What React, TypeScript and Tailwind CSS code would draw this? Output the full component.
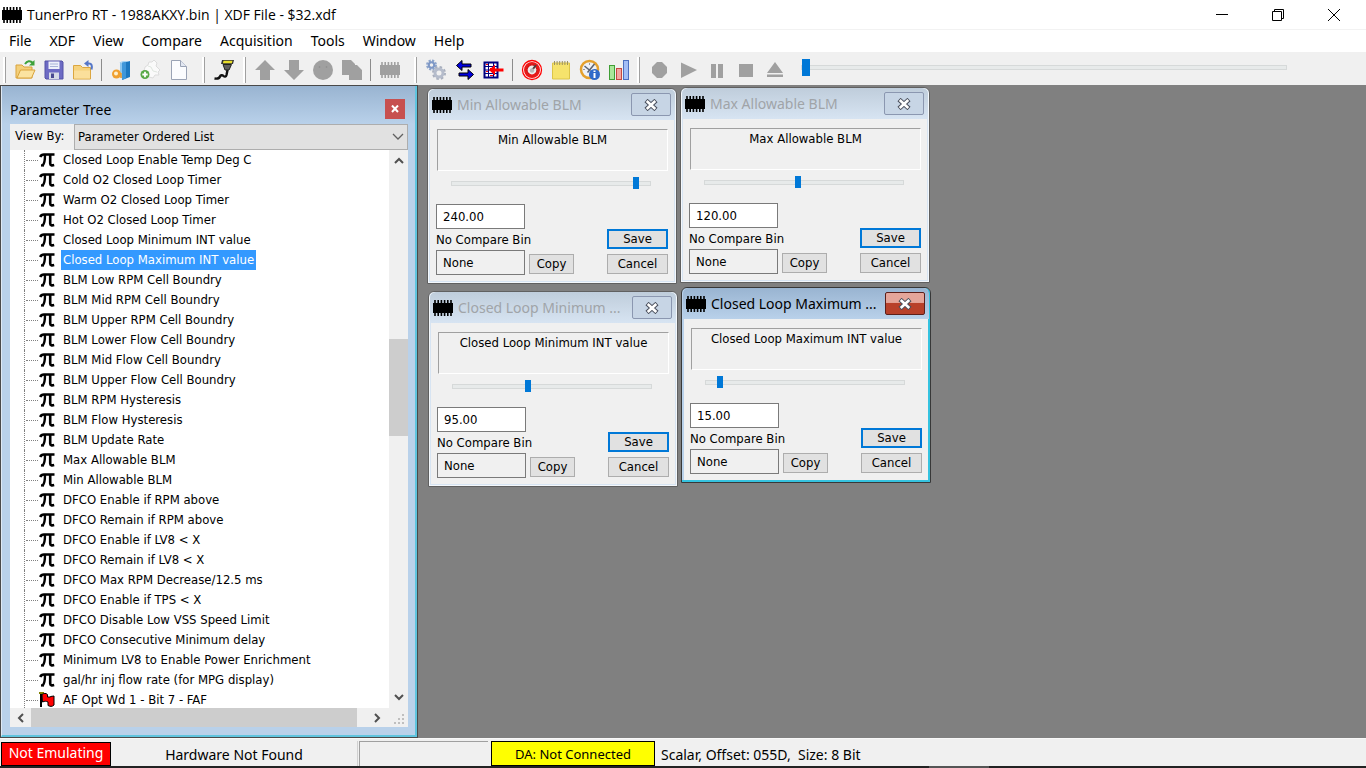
import { useState } from "react";
import type { ReactNode } from "react";

type ScalarWindowProps = {
  id: string;
  title: string;
  name: string;
  initial: number;
  place: string;
  active?: boolean;
};

const treeItems = [
  "Closed Loop Enable Temp Deg C",
  "Cold O2 Closed Loop Timer",
  "Warm O2 Closed Loop Timer",
  "Hot O2 Closed Loop Timer",
  "Closed Loop Minimum INT value",
  "Closed Loop Maximum INT value",
  "BLM Low RPM Cell Boundry",
  "BLM Mid RPM Cell Boundry",
  "BLM Upper RPM Cell Boundry",
  "BLM Lower Flow Cell Boundry",
  "BLM Mid Flow Cell Boundry",
  "BLM Upper Flow Cell Boundry",
  "BLM RPM Hysteresis",
  "BLM Flow Hysteresis",
  "BLM Update Rate",
  "Max Allowable BLM",
  "Min Allowable BLM",
  "DFCO Enable if RPM above",
  "DFCO Remain if RPM above",
  "DFCO Enable if LV8 < X",
  "DFCO Remain if LV8 < X",
  "DFCO Max RPM Decrease/12.5 ms",
  "DFCO Enable if TPS < X",
  "DFCO Disable Low VSS Speed Limit",
  "DFCO Consecutive Minimum delay",
  "Minimum LV8 to Enable Power Enrichment",
  "gal/hr inj flow rate (for MPG display)",
  "AF Opt Wd 1 - Bit 7 - FAF",
];

const menus = ["File", "XDF", "View", "Compare", "Acquisition", "Tools", "Window", "Help"];

function Chip({ color = "#000" }: { color?: string }) {
  return (
    <svg width="20" height="16" viewBox="0 0 20 16" className="shrink-0" aria-hidden="true">
      <rect x="0" y="3" width="20" height="10" fill={color} />
      <path d="M2 0v16M5.2 0v16M8.4 0v16M11.6 0v16M14.8 0v16M18 0v16" stroke={color} strokeWidth="1.6" />
    </svg>
  );
}

function Pi() {
  return (
    <svg width="16" height="16" viewBox="0 0 16 16" aria-hidden="true">
      <path d="M1.2 5C2 3 3 2.5 5 2.5H15.500" fill="none" stroke="#000" strokeWidth="2.6" />
      <path d="M6 3c0 5 0 8-2.2 10.3" fill="none" stroke="#000" strokeWidth="2.4" />
      <path d="M2 13.4h3" stroke="#000" strokeWidth="2.4" />
      <path d="M11.2 3v8.5c0 2 1.6 2.2 4 1.600" fill="none" stroke="#000" strokeWidth="2.6" />
    </svg>
  );
}

function Flag() {
  return (
    <svg width="16" height="16" viewBox="0 0 16 16" aria-hidden="true">
      <path d="M0 0h5v2H0z" fill="#808000" />
      <path d="M2 2v13" stroke="#000" strokeWidth="2" />
      <path d="M3 2.500c2-1.500 4-1.500 5.500 0V5h3V4.500L15 4v9c-2 2-4 1.500-6 .5V10c-2-1-3-1-5.500 0z" fill="#f00" stroke="#000" strokeWidth="1" />
    </svg>
  );
}

function Chevron({ d }: { d: string }) {
  return (
    <svg width="12" height="12" viewBox="0 0 12 12" aria-hidden="true">
      <path d={d} fill="none" stroke="#505050" strokeWidth="2" />
    </svg>
  );
}

function ToolButton({ label, children }: { label: string; children: ReactNode }) {
  return (
    <button type="button" aria-label={label} className="flex h-7 w-[29px] shrink-0 items-center justify-center">
      {children}
    </button>
  );
}

function Icon({ children }: { children: ReactNode }) {
  return (
    <svg width="22" height="22" viewBox="0 0 22 22" aria-hidden="true">
      {children}
    </svg>
  );
}

function Grip() {
  return <div className="mx-1 h-[26px] w-[3px] shrink-0 border-r border-[#a0a0a0] bg-white" />;
}

function Separator() {
  return <div className="mx-1 h-[22px] w-px shrink-0 bg-[#8c8c8c]" />;
}

function FolderShape() {
  return (
    <>
      <path d="M2 6h6l2 2h8v11H2z" fill="#f3cf7a" stroke="#d9a33c" />
      <path d="M3 19L6.500 11H21l-3.500 8z" fill="#fbe3a0" stroke="#d9a33c" />
    </>
  );
}

function Toolbar() {
  return (
    <div className="flex h-[33px] shrink-0 items-center bg-[#f0f0f0] pt-[2px] pl-[3px]">
      <div className="mr-1 h-[26px] w-[3px] shrink-0 border-r border-[#a0a0a0] bg-white" />
      <ToolButton label="Open">
        <Icon>
          <FolderShape />
          <path d="M11 5c2-3 5-4 8-1" fill="none" stroke="#3da13b" strokeWidth="2" />
          <path d="M20.500 1v5.500H15z" fill="#3da13b" />
        </Icon>
      </ToolButton>
      <ToolButton label="Save bin">
        <Icon>
          <path d="M2 2h17l1 1v17H3l-1-1z" fill="#6d6bc4" stroke="#5452a6" />
          <path d="M5.500 2.500h11V10h-11z" fill="#eef1fb" />
          <path d="M7 5h8M7 7.500h8" stroke="#a9b4d8" />
          <path d="M6 13.500h10V20H6z" fill="#d7dbe6" />
          <path d="M8 14.500h3V19H8z" fill="#4a4a90" />
        </Icon>
      </ToolButton>
      <ToolButton label="Close bin">
        <Icon>
          <path d="M1.500 6.500h7l2 2h8V20h-17z" fill="#f6d27c" stroke="#dba640" />
          <path d="M2 11.500h16V19.500H2z" fill="#fbdf9b" />
          <path d="M14 4.500h3c2.500 0 3.500 2 2.500 6" fill="none" stroke="#5577c8" strokeWidth="2" />
          <path d="M12 4.500L16.500 1v7z" fill="#5577c8" />
        </Icon>
      </ToolButton>
      <Separator />
      <ToolButton label="Open XDF">
        <Icon>
          <path d="M10 3l3 1v16l-3-2z" fill="#8cc6ef" />
          <path d="M12 3.500L20 2v16l-8 3z" fill="#1c78c0" />
          <path d="M12 3.500L16 2.800V19.500L12 21z" fill="#3f97da" />
          <path d="M9 3.500l4-1.500 7 0-8 1.500z" fill="#a7d4f4" />
          <circle cx="6.500" cy="15" r="4.500" fill="#f0a030" />
          <circle cx="6" cy="14.500" r="2" fill="#fff1cf" />
          <path d="M11 14v5" fill="none" stroke="#ef9a26" strokeWidth="1.500" />
        </Icon>
      </ToolButton>
      <ToolButton label="New XDF">
        <Icon>
          <path d="M6 8l3-2 1-3 3 0 2-2 3 3-1 3 4 4-2 2 1 3-4 0-2 3-4-1-5-6z" fill="#fafafa" stroke="#dcdcdc" />
          <path d="M9 7l3 1 2 4 4 1" fill="none" stroke="#dfe6df" />
          <circle cx="6" cy="15.500" r="4.500" fill="#58a846" />
          <path d="M6 12.800v5.400M3.300 15.500h5.400" stroke="#fff" strokeWidth="1.800" />
        </Icon>
      </ToolButton>
      <ToolButton label="New bin">
        <Icon>
          <path d="M3.500 1.500h9l6 6v13h-15z" fill="#fbfcfe" stroke="#9aa3b5" />
          <path d="M12.500 1.500v6h6" fill="#e3e8f2" stroke="#9aa3b5" />
        </Icon>
      </ToolButton>
      <div className="w-[5px] shrink-0" />
      <Grip />
      <ToolButton label="Connect">
        <Icon>
          <path d="M9 1h12l-1 4H8z" fill="#333" />
          <path d="M10.500 1.800h9l-.6 2.400h-9z" fill="#e9df2b" />
          <path d="M10 5.500h8.500L16 11h-4z" fill="#606060" stroke="#222" />
          <path d="M14.500 11l-1 5c-.5 2-2 2-3 1s-3-1-3.500.5S5 20 1.500 19.500" fill="none" stroke="#111" strokeWidth="2.400" />
        </Icon>
      </ToolButton>
      <div className="w-px shrink-0" />
      <Grip />
      <ToolButton label="Upload">
        <Icon>
          <path d="M11 1l10 10h-5v10H6V11H1z" fill="#a0a0a0" />
        </Icon>
      </ToolButton>
      <ToolButton label="Download">
        <Icon>
          <path d="M11 21l10-10h-5V1H6v10H1z" fill="#a0a0a0" />
        </Icon>
      </ToolButton>
      <ToolButton label="Verify">
        <Icon>
          <circle cx="11" cy="11" r="10" fill="#a0a0a0" />
          <path d="M7.500 7v2M14.500 7v2" stroke="#929292" strokeWidth="1.500" />
        </Icon>
      </ToolButton>
      <ToolButton label="Copy">
        <Icon>
          <path d="M1 1h9l4 4v1h2l5 5v10H8v-5H1z" fill="#a0a0a0" />
        </Icon>
      </ToolButton>
      <Separator />
      <ToolButton label="Chip">
        <Chip color="#a0a0a0" />
      </ToolButton>
      <div className="w-[6px] shrink-0" />
      <Grip />
      <ToolButton label="Settings">
        <Icon>
          <circle cx="6.500" cy="6" r="4" fill="none" stroke="#8fa6cc" strokeWidth="3" strokeDasharray="2 1.140" />
          <circle cx="6.500" cy="6" r="2.700" fill="none" stroke="#7e98c6" strokeWidth="2" />
          <circle cx="14" cy="14" r="5.500" fill="none" stroke="#a8afbd" strokeWidth="3" strokeDasharray="2.300 2" />
          <circle cx="14" cy="14" r="4" fill="none" stroke="#b5bccb" strokeWidth="3" />
        </Icon>
      </ToolButton>
      <ToolButton label="Compare bins">
        <Icon>
          <path d="M2.500 6.500l5.500-5v3.500h9v3H8v3.500z" fill="#0000e0" stroke="#000" />
          <path d="M19.500 15.500l-5.500-5v3.500H5v3h9v3.500z" fill="#0000e0" stroke="#000" />
        </Icon>
      </ToolButton>
      <ToolButton label="Compare tables">
        <Icon>
          <rect x="1.500" y="3.500" width="13" height="15" fill="#fff" stroke="#000080" strokeWidth="2" />
          <path d="M1 7.500h14M1 11h14M1 14.500h14M5.500 3v16M10.500 3v16" stroke="#000080" />
          <path d="M3 5.500h2M7 9.500h3M3 12.500h2M7 16.500h3" stroke="#f00" />
          <path d="M6 11l6-5.500V9.500h8.500v3H12v4z" fill="#f00" />
        </Icon>
      </ToolButton>
      <Separator />
      <ToolButton label="Dashboard">
        <Icon>
          <circle cx="11" cy="11" r="9.500" fill="#fff" stroke="#f00" strokeWidth="1.300" />
          <circle cx="11" cy="11" r="6.200" fill="#ececec" stroke="#e81818" strokeWidth="3.600" />
          <path d="M7.500 14.500a5 5 0 1 1 7-.2" fill="none" stroke="#902020" strokeWidth="1" strokeDasharray="1 1.500" />
          <path d="M10.500 12L15 6" stroke="#4b4040" strokeWidth="2" />
          <circle cx="11" cy="11.500" r="2.200" fill="#b8b8b8" />
        </Icon>
      </ToolButton>
      <ToolButton label="Notes">
        <Icon>
          <path d="M2.500 4h17v16h-17z" fill="#f6e36c" stroke="#dcc548" />
          <path d="M4.500 2v4M7.100 2v4M9.700 2v4M12.300 2v4M14.900 2v4M17.500 2v4" stroke="#9b9262" />
        </Icon>
      </ToolButton>
      <ToolButton label="History">
        <Icon>
          <circle cx="10.500" cy="10.500" r="8.500" fill="#eef1f6" stroke="#e5a02c" strokeWidth="2.500" />
          <path d="M10.500 4v2M4 10.500h2M15.500 10.500h2M10.500 15v2" stroke="#999" />
          <path d="M5.500 7l6 5M15.500 5l-7 8.500" stroke="#5b6270" strokeWidth="1.500" />
          <circle cx="15.500" cy="15.500" r="5.500" fill="#2f69c9" />
          <path d="M15.500 14v5M15.500 11.500v1.600" stroke="#fff" strokeWidth="2" />
        </Icon>
      </ToolButton>
      <ToolButton label="Graph">
        <Icon>
          <rect x="1.500" y="6.500" width="5" height="14" fill="#a9e79a" stroke="#3f9e35" />
          <rect x="8.500" y="9.500" width="5" height="11" fill="#f2a6a0" stroke="#c54840" />
          <rect x="15.500" y="1.500" width="5" height="19" fill="#a3bdf5" stroke="#4d6fc0" />
        </Icon>
      </ToolButton>
      <Grip />
      <ToolButton label="Record">
        <Icon>
          <path d="M9 3h5l5 5v6l-5 5H9l-5-5V8z" fill="#a0a0a0" />
        </Icon>
      </ToolButton>
      <ToolButton label="Play">
        <Icon>
          <path d="M4 3.500L20 11 4 19z" fill="#a0a0a0" />
        </Icon>
      </ToolButton>
      <ToolButton label="Pause">
        <Icon>
          <path d="M5 5h5v14H5zM12 5h5v14h-5z" fill="#a0a0a0" />
        </Icon>
      </ToolButton>
      <ToolButton label="Stop">
        <Icon>
          <path d="M4 5h14v13H4z" fill="#a0a0a0" />
        </Icon>
      </ToolButton>
      <ToolButton label="Eject">
        <Icon>
          <path d="M11 3l8 11H3zM3 15.500h16V18H3z" fill="#a0a0a0" />
        </Icon>
      </ToolButton>
      <input
        type="range"
        aria-label="Playback position"
        defaultValue={0}
        className="mb-1 ml-3 h-[17px] w-[486px] shrink appearance-none bg-transparent [&::-webkit-slider-runnable-track]:h-[5px] [&::-webkit-slider-runnable-track]:border [&::-webkit-slider-runnable-track]:border-[#d6d9d9] [&::-webkit-slider-runnable-track]:bg-[#e7eaea] [&::-webkit-slider-thumb]:-mt-[7px] [&::-webkit-slider-thumb]:h-[17px] [&::-webkit-slider-thumb]:w-2 [&::-webkit-slider-thumb]:appearance-none [&::-webkit-slider-thumb]:bg-[#0078d7]"
      />
    </div>
  );
}

function ParameterTree() {
  const [selected, setSelected] = useState(5);

  return (
    <aside className="flex w-[418px] shrink-0 flex-col border border-[#4a4a4a]">
      <div className="flex min-h-0 flex-1 flex-col border-r-2 border-b-2 border-l border-[#5fc4de] border-l-[#dfe9f4] bg-[#b9d1ea] pr-[7px] pb-2 pl-2">
        <div className="-mr-[7px] -ml-2 flex h-[38px] shrink-0 items-center justify-between bg-linear-to-b from-[#99b4d1] to-[#b9d1ea] pr-[10px] pl-2">
          <h2 className="pt-[10px] text-[14px] leading-5 text-black">Parameter Tree</h2>
          <button type="button" aria-label="Close" className="mt-2 flex h-5 w-5 items-center justify-center bg-[#c75050]">
            <svg width="8" height="8" viewBox="0 0 8 8" aria-hidden="true">
              <path d="M1 .5l6 6.500M7 .5L1 7" stroke="#fff" strokeWidth="2" />
            </svg>
          </button>
        </div>
        <div className="flex h-[26px] shrink-0 bg-[#f0f0f0] font-['DejaVu_Sans_Condensed','Noto_Sans',sans-serif] text-[13px]">
          <label htmlFor="viewBy" className="w-16 shrink-0 pl-[5px] leading-6">
            View By:
          </label>
          <div className="relative flex-1">
            <select id="viewBy" className="h-[26px] w-full appearance-none border border-[#adadad] bg-[#e1e1e1] px-[3px]">
              <option>Parameter Ordered List</option>
            </select>
            <svg width="12" height="8" viewBox="0 0 12 8" className="pointer-events-none absolute top-[9px] right-1" aria-hidden="true">
              <path d="M1 1l5 5 5-5" fill="none" stroke="#606060" strokeWidth="1.300" />
            </svg>
          </div>
        </div>
        <div className="flex min-h-0 flex-1">
          <ul className="min-w-0 flex-1 overflow-hidden bg-white pl-[14px] font-['DejaVu_Sans_Condensed','Noto_Sans',sans-serif]">
            {treeItems.map((item, i) => (
              <li key={item} className="flex h-5 items-center border-l border-dotted border-[#808080]">
                <span className="ml-px h-0 w-3 border-t border-dotted border-[#808080]" />
                <span className="ml-px w-[22px] shrink-0">{i === treeItems.length - 1 ? <Flag /> : <Pi />}</span>
                <button
                  type="button"
                  onClick={() => setSelected(i)}
                  className={
                    selected === i
                      ? "h-5 bg-[#3399ff] px-[2px] text-[13px] leading-5 whitespace-nowrap text-white"
                      : "h-5 px-[2px] text-[13px] leading-5 whitespace-nowrap"
                  }
                >
                  {item}
                </button>
              </li>
            ))}
          </ul>
          <div className="flex w-[19px] shrink-0 flex-col items-center bg-[#f0f0f0] py-[5px]">
            <Chevron d="M2 8l4-4 4 4" />
            <div className="flex-[172]" />
            <div className="w-full flex-[98] bg-[#cdcdcd]" />
            <div className="flex-[255]" />
            <Chevron d="M2 4l4 4 4-4" />
          </div>
        </div>
        <div className="flex h-[19px] shrink-0 items-center bg-[#f0f0f0] pr-[2px] pl-[5px]">
          <Chevron d="M8 2L4 6l4 4" />
          <div className="ml-1 h-full flex-1 bg-[#cdcdcd]" />
          <div className="ml-[14px]">
            <Chevron d="M4 2l4 4-4 4" />
          </div>
          <svg width="12" height="12" viewBox="0 0 12 12" className="mt-1 ml-[11px]" aria-hidden="true">
            <path d="M8 0h2v2H8zM4 4h2v2H4zM8 4h2v2H8zM0 8h2v2H0zM4 8h2v2H4zM8 8h2v2H8z" fill="#bfbfbf" />
          </svg>
        </div>
      </div>
    </aside>
  );
}

function ScalarWindow({ id, title, name, initial, place, active }: ScalarWindowProps) {
  const [value, setValue] = useState(initial);

  return (
    <section
      className={`absolute w-[250px] rounded-t-md border pb-[2px] ${place} ${
        active
          ? "border-[#383838] bg-[#b9d1ea] shadow-[inset_-1px_-1px_0_1px_#35c3e0]"
          : "border-[#606060] bg-[#d7e4f2] shadow-[inset_0_0_0_1px_#f4f8fc]"
      }`}
    >
      <header
        className={
          active
            ? "mx-px flex h-[31px] items-center rounded-t-md bg-linear-to-b from-[#99b4d1] to-[#b9d1ea] pr-1 pl-[3px]"
            : "mx-px flex h-[31px] items-center rounded-t-md bg-linear-to-b from-[#bfcddb] to-[#d7e4f2] pr-1 pl-[3px]"
        }
      >
        <Chip />
        <h3
          className={
            active
              ? "ml-[5px] min-w-0 flex-1 text-[14px] leading-5 whitespace-nowrap text-black"
              : "ml-[5px] min-w-0 flex-1 text-[14px] leading-5 whitespace-nowrap text-[#a0a4a8]"
          }
        >
          {title}
        </h3>
        <button
          type="button"
          aria-label="Close"
          className={
            active
              ? "flex h-[23px] w-10 shrink-0 items-center justify-center rounded-xs border border-[#5c1f1a] bg-linear-to-b from-[#e5a59a] from-45% to-[#b8402a] to-50%"
              : "flex h-[23px] w-10 shrink-0 items-center justify-center rounded-xs border border-[#8b97b0] bg-[#c7d5e5]"
          }
        >
          <svg width="16" height="12" viewBox="0 0 16 12" aria-hidden="true">
            <path d="M3 1.500l10 9M13 1.500l-10 9" stroke="#4a4f5c" strokeWidth="4.600" />
            <path d="M3.700 2l8.600 8M12.300 2l-8.600 8" stroke="#fff" strokeWidth="2.600" />
          </svg>
        </button>
      </header>
      <div className="mx-[2px] bg-[#f0f0f0] px-[6px] pt-[9px] pb-[6px] font-['DejaVu_Sans_Condensed','Noto_Sans',sans-serif] text-[13px]">
        <p className="ml-px h-[42px] border border-t-[#a0a0a0] border-r-white border-b-white border-l-[#a0a0a0] text-center leading-5">
          {name}
        </p>
        <input
          type="range"
          min={0}
          max={255}
          value={value}
          onChange={(e) => setValue(Number(e.target.value))}
          aria-label={name}
          className="mt-[6px] ml-[15px] block h-3 w-[200px] appearance-none bg-transparent [&::-webkit-slider-runnable-track]:h-[5px] [&::-webkit-slider-runnable-track]:border [&::-webkit-slider-runnable-track]:border-[#d6d9d9] [&::-webkit-slider-runnable-track]:bg-[#e7eaea] [&::-webkit-slider-thumb]:-mt-[5px] [&::-webkit-slider-thumb]:h-3 [&::-webkit-slider-thumb]:w-[6px] [&::-webkit-slider-thumb]:appearance-none [&::-webkit-slider-thumb]:bg-[#0078d7]"
        />
        <div className="mt-[15px] flex items-end justify-between">
          <div className="flex flex-col">
            <input
              type="text"
              aria-label={`${name} value`}
              defaultValue={initial.toFixed(2)}
              className="h-[25px] w-[89px] border border-[#7a7a7a] bg-white px-[6px]"
            />
            <label htmlFor={id} className="h-[21px] leading-[22px]">
              No Compare Bin
            </label>
            <div className="flex items-end gap-1">
              <input id={id} type="text" readOnly value="None" className="h-[25px] w-[89px] border border-[#7a7a7a] bg-[#f0f0f0] px-[6px]" />
              <button type="button" className="mb-px h-5 w-[45px] border border-[#adadad] bg-[#e1e1e1] leading-[18px]">
                Copy
              </button>
            </div>
          </div>
          <div className="mb-px flex w-[61px] flex-col gap-[5px]">
            <button type="button" className="h-5 border-2 border-[#0078d7] bg-[#e1e1e1] leading-4">
              Save
            </button>
            <button type="button" className="h-5 border border-[#adadad] bg-[#e1e1e1] leading-[18px]">
              Cancel
            </button>
          </div>
        </div>
      </div>
    </section>
  );
}

function StatusBar() {
  return (
    <footer className="flex h-[28px] shrink-0 items-stretch border-t border-[#f8f8f8] bg-[#f0f0f0] pt-[2px] text-[14px]">
      <div className="mt-px ml-px w-[110px] shrink-0 border border-black bg-[#f00] text-center leading-5 whitespace-nowrap text-white">
        Not Emulating
      </div>
      <div className="w-[247px] shrink-0 border-r border-[#d0d0d0] text-center leading-7">Hardware Not Found</div>
      <div className="ml-px w-[129px] shrink-0 border-t border-l border-[#a0a0a0]" />
      <div className="ml-[3px] w-[164px] shrink-0 border border-black bg-[#ff0] text-center text-[13px] leading-6">
        DA: Not Connected
      </div>
      <div className="ml-[6px] leading-7 whitespace-pre">{"Scalar, Offset: 055D,  Size: 8 Bit"}</div>
    </footer>
  );
}

export default function App() {
  return (
    <div className="flex h-screen flex-col overflow-hidden bg-white font-['Noto_Sans',sans-serif] text-black">
      <header className="flex h-[30px] shrink-0 items-center justify-between border-b border-[#f2f2f2] pl-[2px]">
        <div className="flex items-center gap-[5px]">
          <Chip />
          <h1 className="font-['Open_Sans',sans-serif] text-[14px] leading-5">TunerPro RT - 1988AKXY.bin | XDF File - $32.xdf</h1>
        </div>
        <div className="flex">
          <button type="button" aria-label="Minimize" className="flex h-7 w-14 items-center justify-center">
            <svg width="12" height="12" viewBox="0 0 12 12">
              <path d="M0 5.500h12" stroke="#000" />
            </svg>
          </button>
          <button type="button" aria-label="Restore" className="flex h-7 w-14 items-center justify-center">
            <svg width="12" height="12" viewBox="0 0 12 12" fill="none" stroke="#000">
              <path d="M.5 2.500h9v9h-9z" />
              <path d="M2.500 2.500v-2h9v9h-2" />
            </svg>
          </button>
          <button type="button" aria-label="Close" className="mr-1 flex h-7 w-14 items-center justify-center">
            <svg width="12" height="12" viewBox="0 0 12 12" stroke="#000">
              <path d="M0 0l12 12M12 0L0 12" />
            </svg>
          </button>
        </div>
      </header>
      <nav className="flex h-[22px] shrink-0 items-center gap-[18px] px-[9px]">
        {menus.map((menu) => (
          <button key={menu} type="button" className="text-[14px] leading-5">
            {menu}
          </button>
        ))}
      </nav>
      <Toolbar />
      <main className="flex min-h-0 flex-1 bg-[#808080]">
        <ParameterTree />
        <div className="relative flex-1 overflow-hidden">
          <ScalarWindow id="cmpMinBlm" title="Min Allowable BLM" name="Min Allowable BLM" initial={240} place="left-[9px] top-[3px]" />
          <ScalarWindow id="cmpMaxBlm" title="Max Allowable BLM" name="Max Allowable BLM" initial={120} place="left-[262px] top-[2px]" />
          <ScalarWindow id="cmpMinInt" title="Closed Loop Minimum ..." name="Closed Loop Minimum INT value" initial={95} place="left-[10px] top-[206px]" />
          <ScalarWindow id="cmpMaxInt" title="Closed Loop Maximum ..." name="Closed Loop Maximum INT value" initial={15} place="left-[263px] top-[202px]" active />
        </div>
      </main>
      <StatusBar />
      <div className="flex h-[2px] shrink-0 bg-[#222]">
        <div className="ml-[68%] w-[60px] bg-[#555]" />
      </div>
    </div>
  );
}
